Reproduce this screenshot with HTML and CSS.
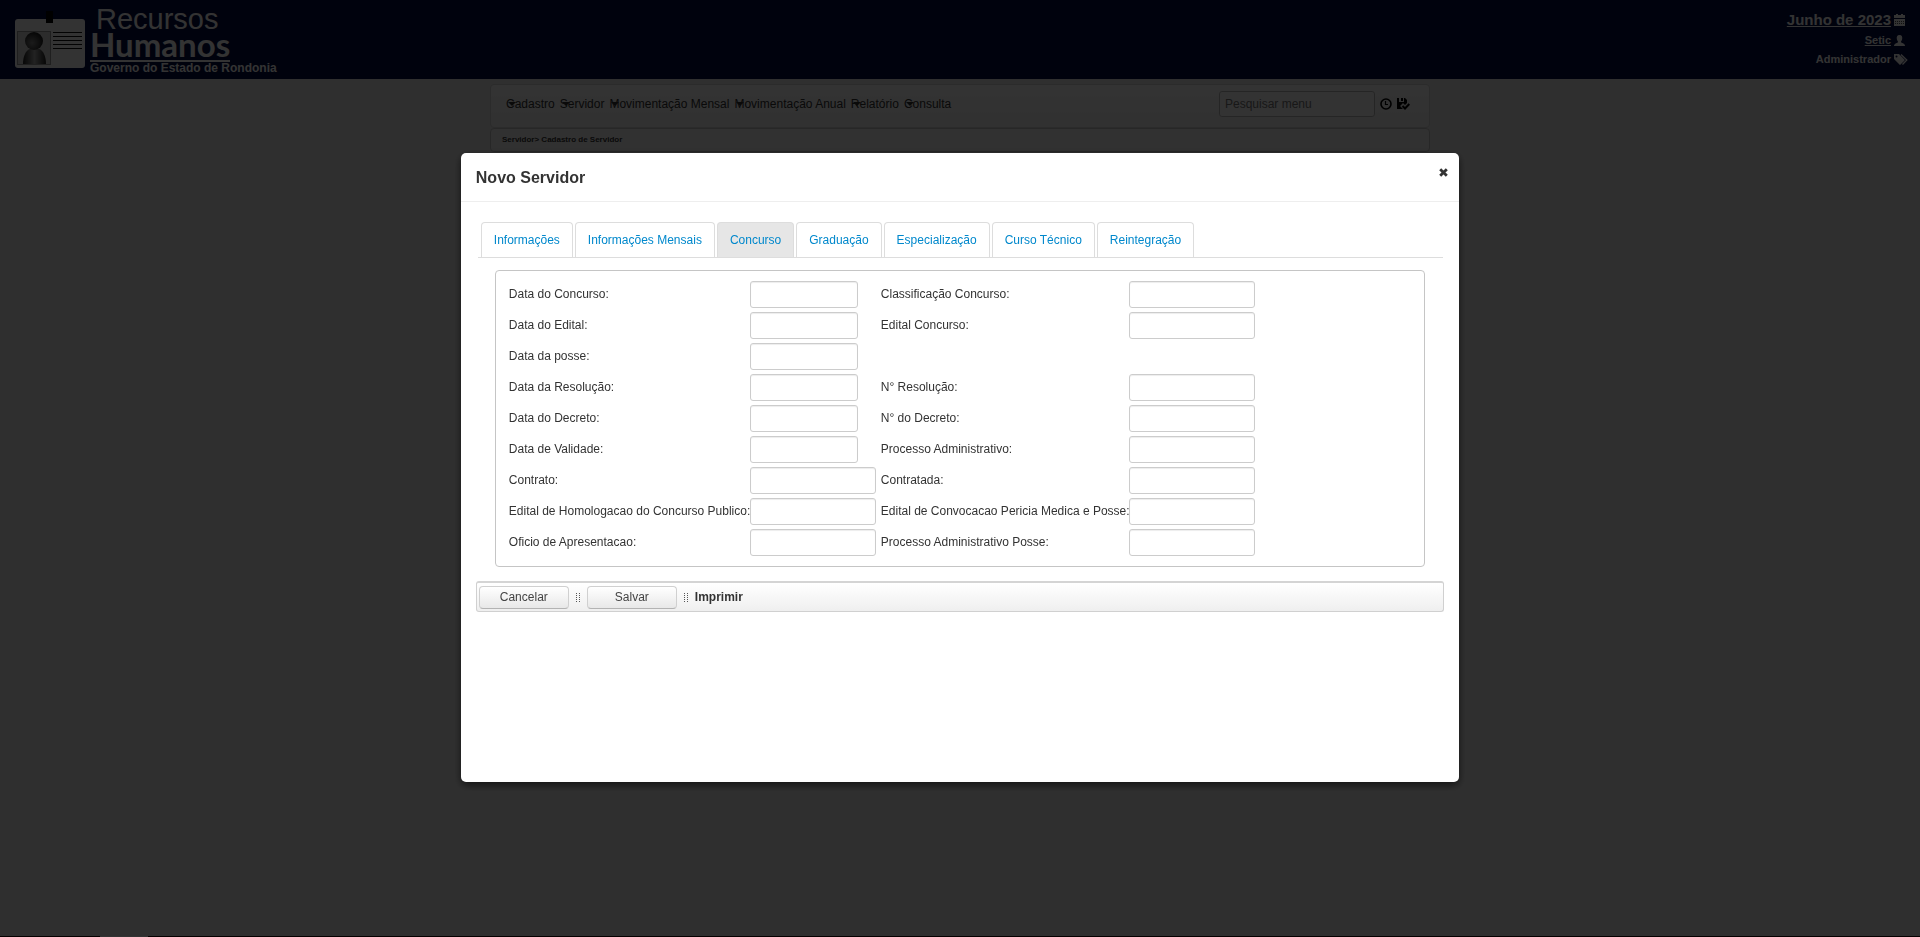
FILE: index.html
```html
<!DOCTYPE html>
<html lang="pt-BR">
<head>
<meta charset="utf-8">
<title>Recursos Humanos</title>
<link rel="stylesheet" href="styles.css">
</head>
<body>
<header class="topbar">
  <div class="brand">
    <svg class="badge-logo" width="72" height="60" viewBox="0 0 72 60" aria-hidden="true">
      <defs>
        <radialGradient id="head" cx="40%" cy="60%" r="60%"><stop offset="0" stop-color="#888"/><stop offset="1" stop-color="#222"/></radialGradient>
        <linearGradient id="torso" x1="0" y1="0" x2="1" y2="0"><stop offset="0" stop-color="#222"/><stop offset=".5" stop-color="#aaa"/><stop offset="1" stop-color="#222"/></linearGradient>
      </defs>
      <rect x="1" y="9" width="70" height="49" rx="3" fill="#fff"/>
      <rect x="3.500" y="21.500" width="33" height="33" fill="#ddd" stroke="#999"/>
      <path d="M9 54c0-8 3-14 7-15h9c4 1 7 7 7 15z" fill="url(#torso)"/>
      <circle cx="20" cy="31" r="9" fill="url(#head)"/>
      <path d="M39 22.500h29M39 26.500h29M39 30.500h29M39 34.500h29M39 38.500h29" stroke="#111"/>
      <rect x="32" y="1" width="7" height="12" fill="#000"/>
    </svg>
    <div class="brand-text">
      <span class="brand-first">Recursos</span>
      <span class="brand-second">Humanos</span>
      <span class="brand-sub">Governo do Estado de Rondonia</span>
    </div>
  </div>
  <div class="session">
    <a class="period" href="#"><span>Junho de 2023</span>
      <svg width="11" height="12" viewBox="0 0 11 12"><path d="M0 1h2V0h2v1h3V0h2v1h2v3H0zM0 5h11v7H0z" fill="#fff"/><path d="M1 7.500h9M1 9.500h9" stroke="#555" stroke-dasharray="1 1"/></svg></a>
    <a class="user" href="#"><span>Setic</span>
      <svg width="11" height="11" viewBox="0 0 11 11"><path d="M5.500 0C8 0 8.500 2 8.200 4 8 5.500 7 6 7 7c0 1 4 1.200 4 4H0c0-2.800 4-3 4-4 0-1-1-1.500-1.200-3C2.500 2 3 0 5.500 0z" fill="#fff"/></svg></a>
    <div class="role"><span>Administrador</span>
      <svg width="14" height="11" viewBox="0 0 14 11"><path fill-rule="evenodd" d="M0 0h5l6 6-5 5-6-6zM2.500 1.500a1 1 0 100 2 1 1 0 000-2z" fill="#fff"/><path d="M7 .500l5.800 5.500-4.300 4.500" fill="none" stroke="#fff" stroke-width="1.300"/></svg></div>
  </div>
</header>

<main class="container">
  <nav class="menubar">
    <ul class="menu">
      <li><a href="#">Cadastro</a></li>
      <li><a href="#">Servidor</a></li>
      <li><a href="#">Movimentação Mensal</a></li>
      <li><a href="#">Movimentação Anual</a></li>
      <li><a href="#">Relatório</a></li>
      <li><a href="#">Consulta</a></li>
    </ul>
    <div class="menu-tools">
      <input class="search" type="text" placeholder="Pesquisar menu" aria-label="Pesquisar menu">
      <button class="tool" type="button" aria-label="Histórico"><svg width="12" height="12" viewBox="0 0 12 12"><circle cx="6" cy="6" r="5" fill="none" stroke="#000" stroke-width="1.600"/><path d="M5.500 3v3.500H8" fill="none" stroke="#000" stroke-width="1.200"/></svg></button>
      <button class="tool" type="button" aria-label="Gravar"><svg width="13" height="12" viewBox="0 0 13 12"><path d="M0 0h2v4h5V0h1l2 2v3L8 7 6 5 3 8l3 3H0z" fill="#000"/><path d="M4 0h2v3H4z" fill="#000"/><path d="M5.500 8l2.500 2.500L12.300 6" fill="none" stroke="#000" stroke-width="2"/></svg></button>
    </div>
  </nav>
  <div class="breadcrumb">Servidor&gt; Cadastro de Servidor</div>
</main>
<footer class="page-foot"><span class="foot-mark"></span></footer>

<div class="overlay">
  <section class="modal" role="dialog" aria-modal="true" aria-labelledby="modal-title">
    <header class="modal-head">
      <h1 id="modal-title" class="modal-title">Novo Servidor</h1>
      <button class="close" type="button" aria-label="Fechar"><svg width="9" height="9" viewBox="0 0 9 9"><path d="M1.200 1.200l6.600 6.600M7.800 1.200L1.200 7.800" stroke="#333" stroke-width="2.800"/></svg></button>
    </header>
    <div class="modal-body">
      <div class="tabs" role="tablist">
        <a class="tab" role="tab" href="#">Informações</a>
        <a class="tab" role="tab" href="#">Informações Mensais</a>
        <a class="tab tab-active" role="tab" aria-selected="true" href="#">Concurso</a>
        <a class="tab" role="tab" href="#">Graduação</a>
        <a class="tab" role="tab" href="#">Especialização</a>
        <a class="tab" role="tab" href="#">Curso Técnico</a>
        <a class="tab" role="tab" href="#">Reintegração</a>
      </div>
      <form>
        <div class="panel">
          <div class="fields">
            <label for="f1">Data do Concurso:</label><input id="f1" class="field date" type="text">
            <label for="f2">Classificação Concurso:</label><input id="f2" class="field" type="text">
            <label for="f3">Data do Edital:</label><input id="f3" class="field date" type="text">
            <label for="f4">Edital Concurso:</label><input id="f4" class="field" type="text">
            <label for="f5">Data da posse:</label><input id="f5" class="field date" type="text">
            <label class="row-start" for="f6">Data da Resolução:</label><input id="f6" class="field date" type="text">
            <label for="f7">N° Resolução:</label><input id="f7" class="field" type="text">
            <label for="f8">Data do Decreto:</label><input id="f8" class="field date" type="text">
            <label for="f9">N° do Decreto:</label><input id="f9" class="field" type="text">
            <label for="f10">Data de Validade:</label><input id="f10" class="field date" type="text">
            <label for="f11">Processo Administrativo:</label><input id="f11" class="field" type="text">
            <label for="f12">Contrato:</label><input id="f12" class="field" type="text">
            <label for="f13">Contratada:</label><input id="f13" class="field" type="text">
            <label for="f14">Edital de Homologacao do Concurso Publico:</label><input id="f14" class="field" type="text">
            <label for="f15">Edital de Convocacao Pericia Medica e Posse:</label><input id="f15" class="field" type="text">
            <label for="f16">Oficio de Apresentacao:</label><input id="f16" class="field" type="text">
            <label for="f17">Processo Administrativo Posse:</label><input id="f17" class="field" type="text">
          </div>
        </div>
        <div class="actions">
          <button class="btn" type="button">Cancelar</button>
          <span class="grip"></span>
          <button class="btn" type="submit">Salvar</button>
          <span class="grip"></span>
          <a class="print" href="#">Imprimir</a>
        </div>
      </form>
    </div>
  </section>
</div>
</body>
</html>
```

FILE: styles.css
```css
* { box-sizing: border-box; }

body {
  margin: 0;
  min-height: 100vh;
  display: flex;
  flex-direction: column;
  background: #ececec;
  color: #333;
  font: 12px/18px "Liberation Sans", Arial, sans-serif;
}

a { color: inherit; text-decoration: none; }
svg { display: block; }

.topbar {
  display: flex;
  justify-content: space-between;
  height: 79px;
  padding: 8px 14px 0;
  background: #000a40;
  color: #fff;
  font-weight: bold;
}
.brand { display: flex; gap: 4px; }
.badge-logo { margin-top: 2px; }
.brand-text { display: flex; flex-direction: column; }
.brand-first { padding-left: 6px; font-size: 29px; line-height: 23px; font-weight: normal; }
.brand-second {
  align-self: flex-start;
  padding-bottom: 2px;
  border-bottom: 2px solid #fff;
  font: bold 33px/27px Lato, sans-serif;
}
.brand-sub { line-height: 12px; }

.session {
  display: flex;
  flex-direction: column;
  align-items: flex-end;
  gap: 1px;
  font-size: 11px;
}
.session > * { display: flex; align-items: center; gap: 3px; }
.period { font-size: 15px; line-height: 24px; }
.user { padding-right: 1px; line-height: 14px; }
.period { padding-right: 1px; }
.period span, .user { text-decoration: underline; }
.role { margin-right: -2px; line-height: 22px; }

.container { width: 940px; max-width: 100%; margin: 5px auto 0; }
.menubar {
  display: flex;
  align-items: center;
  justify-content: space-between;
  height: 44px;
  padding: 0 19px 4px 15px;
  border: 1px solid #d4d4d4;
  border-radius: 4px;
  background: linear-gradient(#fff, #f2f2f2);
}
.menu { display: flex; gap: 5px; margin: 0; padding: 0; list-style: none; }
.menu li { position: relative; }
.menu li::before {
  content: "";
  position: absolute;
  left: 2px;
  top: 7px;
  border: 4px solid transparent;
  border-top-color: #333;
  border-bottom: 0;
}
.menu-tools { display: flex; align-items: center; gap: 5px; }
.search {
  width: 156px;
  height: 26px;
  padding: 0 5px;
  border: 1px solid #bbb;
  border-radius: 3px;
  background: #fff;
  font: 12px "Liberation Sans", Arial, sans-serif;
}
.search::placeholder { color: #777; }
.tool { padding: 0; border: 0; background: none; }
.breadcrumb {
  padding: 0 11px;
  border: 1px solid #c4c4c4;
  border-radius: 4px;
  background: #f5f5f5;
  font-size: 8px;
  line-height: 22px;
  font-weight: bold;
}
.page-foot { height: 1px; margin-top: auto; padding-left: 100px; background: #200; }
.foot-mark { display: block; width: 48px; height: 1px; background: #fff; }

.overlay {
  position: fixed;
  inset: 0;
  display: flex;
  align-items: flex-start;
  justify-content: center;
  padding-top: 153px;
  background: rgba(0, 0, 0, .8);
}
.modal {
  width: 52%;
  min-width: 960px;
  min-height: calc(67vh + 1px);
  border-radius: 5px;
  background: #fff;
  box-shadow: 0 3px 9px rgba(0, 0, 0, .6);
}
.modal-head {
  display: flex;
  justify-content: space-between;
  align-items: flex-start;
  padding: 11px 11px 9px 15px;
  border-bottom: 1px solid #eee;
}
.modal-title { margin: 0; font-size: 16px; line-height: 28px; }
.close { margin-top: 4px; padding: 0; border: 0; background: none; }
.modal-body { padding: 20px 15px; }

.tabs {
  display: flex;
  gap: 2px;
  margin: 0 1px 0 2px;
  padding-left: 3px;
  border-bottom: 1px solid #ddd;
}
.tab {
  padding: 8px 12px;
  border: 1px solid #ddd;
  border-bottom: 0;
  border-radius: 4px 4px 0 0;
  color: #08c;
}
.tab-active { background: #e6e6e6; }

.panel {
  margin: 12px 19px 14px;
  padding: 10px 13px 10px;
  border: 1px solid #c5c5c5;
  border-radius: 4px;
}
.fields {
  display: grid;
  grid-template-columns: 241px 131px 248px 126px;
  grid-auto-rows: 27px;
  row-gap: 4px;
}
.fields label { padding-top: 4px; white-space: nowrap; }
.row-start { grid-column: 1; }
.field {
  width: 126px;
  height: 27px;
  padding: 4px 6px;
  border: 1px solid #ccc;
  border-radius: 3px;
  background: #fff;
  box-shadow: inset 0 1px 1px rgba(0, 0, 0, .075);
  font: inherit;
}
.date { width: 108px; }

.actions {
  display: flex;
  align-items: center;
  gap: 7px;
  height: 31px;
  padding: 0 2px;
  border: 1px solid #d0d0d0;
  border-top: 2px solid #d4d4d4;
  border-radius: 3px;
  background: linear-gradient(#fff, #efefef);
}
.btn {
  width: 90px;
  height: 23px;
  padding: 0;
  border: 1px solid #d0d0d0;
  border-bottom-color: #b3b3b3;
  border-radius: 4px;
  background: linear-gradient(#fff, #e8e8e8);
  color: #444;
  font: inherit;
}
.grip {
  width: 4px;
  height: 9px;
  background: repeating-linear-gradient(#fff0 0 1px, #f8f8f8 1px 2px), linear-gradient(90deg, #555 0 1px, #fff0 1px 3px, #555 3px 4px);
}
.print { font-weight: bold; }
```
